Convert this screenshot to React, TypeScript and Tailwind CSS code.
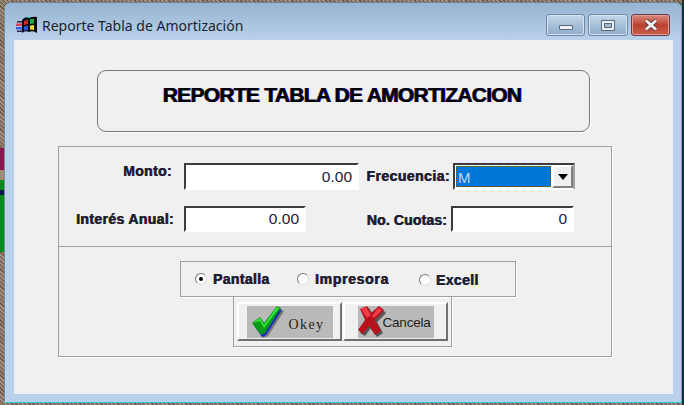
const sans = "font-['Liberation_Sans',Arial,sans-serif]";
const labelClass =
  "text-right text-[14px] leading-none font-bold tracking-[0.36px] text-[#1c1c2c] [text-shadow:0.4px_0_0_#2a3a90,-0.3px_0_0_#b07a30]";
const sunken =
  "border-2 border-t-[#3c3c3c] border-l-[#3c3c3c] border-r-white border-b-white bg-white";

function FlagIcon() {
  return (
    <svg width="22" height="18" viewBox="0 0 22 18" className="shrink-0">
      <path d="M6 4 Q9 0 13 2 Q17 0 21 1 L21 17 Q17 14 13 16 Q9 14 6 17 Z" fill="#0b0b12" />
      <path d="M8 5 L12 3.5 L12 8 L8 9 Z" fill="#d8202c" />
      <path d="M14 3 L18 3 L18 7.5 L14 8 Z" fill="#1fa845" />
      <path d="M8 10.5 L12 9.5 L12 14 L8 14.5 Z" fill="#2a55d8" />
      <path d="M14 9.5 L18 9 L18 14 L14 13.5 Z" fill="#e8d830" />
      <path d="M1 5h5v1.5H1z" fill="#26264a" />
      <path d="M0 7.5h6V10H0z" fill="#d8405a" />
      <path d="M0 11h6v2.5H0z" fill="#3a5ce0" />
      <path d="M1 14.5h5V16H1z" fill="#26264a" />
    </svg>
  );
}

function WindowButtons() {
  return (
    <div className="mt-[11px] mr-[11px] flex gap-[3px]">
      <div className="flex h-[22px] w-[39px] items-end justify-center rounded-[3px] border border-[#6f88a6] bg-gradient-to-b from-[#c5d7e9] via-[#a7c0d9] to-[#8fadcc] pb-[5px] shadow-[inset_0_0_0_1px_#d5e2ef]">
        <div className="h-[5px] w-[14px] rounded-[1px] border border-[#56697e] bg-[#eef2f6]" />
      </div>
      <div className="flex h-[22px] w-[40px] items-center justify-center rounded-[3px] border border-[#6f88a6] bg-gradient-to-b from-[#c5d7e9] via-[#a7c0d9] to-[#8fadcc] shadow-[inset_0_0_0_1px_#d5e2ef]">
        <div className="flex h-[11px] w-[14px] items-center justify-center border border-[#56697e] bg-[#eef2f6]">
          <div className="h-[5px] w-[8px] border border-[#56697e] bg-[#9fb6cd]" />
        </div>
      </div>
      <div className="flex h-[22px] w-[39px] items-center justify-center rounded-[3px] border border-[#6a3a48] bg-gradient-to-b from-[#d98c80] via-[#b9402e] to-[#c8604c] shadow-[inset_0_0_0_1px_#e2a094]">
        <svg width="16" height="12" viewBox="0 0 16 12">
          <path d="M3 1.5 L13 10.5 M13 1.5 L3 10.5" stroke="#5a3038" strokeWidth="4.6" />
          <path d="M3 1.5 L13 10.5 M13 1.5 L3 10.5" stroke="#eef0f2" strokeWidth="3" />
        </svg>
      </div>
    </div>
  );
}

function Field({ value, width, height }: { value: string; width: string; height: string }) {
  return (
    <div className={`${sunken} ${width} ${height} flex items-center justify-end pr-[5px] text-[15.5px] text-[#20203a]`}>
      {value}
    </div>
  );
}

function FrecuenciaSelect() {
  return (
    <div className="flex h-[27px] w-[122px] items-stretch border-2 border-t-[#3c3c3c] border-l-[#3c3c3c] border-r-[#a0a0a0] border-b-white bg-white">
      <div className="m-[1px] flex-1 border border-dotted border-[#7a4a10] bg-[#0078d7] pl-[1px] pt-[3px] text-[15px] leading-none text-[#b9dcfa]">
        M
      </div>
      <div className="flex w-[21px] items-center justify-center border-2 border-t-white border-l-white border-r-[#808080] border-b-[#808080] bg-[#f0f0f0]">
        <svg width="10" height="6" viewBox="0 0 10 6">
          <path d="M0 0h10L5 6z" fill="#000" />
        </svg>
      </div>
    </div>
  );
}

function Radio({ checked }: { checked?: boolean }) {
  return (
    <div className="flex h-[12px] w-[12px] shrink-0 items-center justify-center rounded-full border border-t-[#777] border-l-[#777] border-r-[#ddd] border-b-[#ddd] bg-white">
      {checked && <div className="h-[4px] w-[4px] rounded-full bg-black" />}
    </div>
  );
}

function RadioItem({ label, checked, className }: { label: string; checked?: boolean; className: string }) {
  return (
    <div className={`flex items-center ${className}`}>
      <Radio checked={checked} />
      <span className={labelClass}>{label}</span>
    </div>
  );
}

function CheckIcon() {
  return (
    <svg width="32" height="32" viewBox="0 0 32 32" className="shrink-0">
      <path d="M2 19 L10 14 L14 20 L27 3 L32 5 L16 30 L11 32 Z" fill="#777" />
      <path d="M1 18 L9 13 L13 19 L26 2 L30 4 L14 29 L10 31 Z" fill="#1a2ac0" />
      <path d="M0 17 L8 11 L12 17 L25 0 L29 2 L13 27 L9 29 Z" fill="#0a9a1a" />
      <path d="M1 17 L8 12 L12 19 L25 1 L27 2 L12 22 L8 15 Z" fill="#35e83c" />
    </svg>
  );
}

function CrossIcon() {
  return (
    <svg width="28" height="31" viewBox="0 0 28 31" className="shrink-0">
      <path d="M5 4 L11 2 L15 9 L23 2 L28 7 L19 16 L25 27 L19 31 L13 22 L7 30 L2 27 L9 16 Z" fill="#555" />
      <path d="M2 3 L9 0 L13 7 L21 0 L26 4 L17 14 L23 25 L17 29 L11 20 L5 28 L0 24 L7 14 Z" fill="#b8121c" />
      <path d="M3 3 L8 1 L13 9 L9 12 Z M20 2 L24 4 L16 12 L14 10 Z" fill="#f03c46" />
    </svg>
  );
}

function ImageButton({ panel, children }: { panel: string; children: React.ReactNode }) {
  return (
    <div className="flex h-[39px] w-[105px] items-center justify-center border-2 border-t-white border-l-white border-r-[#707070] border-b-[#707070] bg-[#f0f0f0]">
      <div className={`flex h-[32px] items-center bg-[#b9b9b9] ${panel}`}>{children}</div>
    </div>
  );
}

export default function App() {
  return (
    <div
      className={`${sans} flex h-[405px] w-[684px] overflow-hidden bg-[repeating-linear-gradient(45deg,#6b5a4a_0_1px,#a8957f_1px_2px,#8a7868_2px_3px)]`}
    >
      <div className="flex w-[4px] shrink-0 flex-col pt-[148px]">
        <div className="h-[22px] bg-[#8a1650]" />
        <div className="h-[10px] bg-[#a08c78]" />
        <div className="h-[10px] bg-[#058a1c]" />
        <div className="h-[5px] bg-[#0a1a50]" />
        <div className="h-[57px] bg-[#058a1c]" />
      </div>

      <div className="mt-[2px] flex h-[401px] w-[678px] shrink-0 flex-col rounded-t-[7px] border border-b-[#38c0d8] border-l-[#7d8a96] border-r-[#38c0d8] border-t-[#6f8296] bg-[#b9d1ea]">
        <div className="flex h-[37px] shrink-0 justify-between rounded-t-[6px] bg-gradient-to-b from-[#97b4d1] to-[#b9d1ea]">
          <div className="mt-[13px] ml-[11px] flex items-start gap-[4px]">
            <FlagIcon />
            <span className="font-['Noto_Sans',sans-serif] text-[14px] leading-[20px] text-[#1a2430]">
              Reporte Tabla de Amortización
            </span>
          </div>
          <WindowButtons />
        </div>

        <div className="mr-[8px] mb-[8px] ml-[9px] flex flex-1 flex-col bg-[#f0f0f0]">
          <div className="mt-[30px] ml-[83px] flex h-[62px] w-[493px] items-center justify-center rounded-[9px] border border-[#777] shadow-[1px_1px_0_#fff]">
            <h1 className="mr-[3px] mb-[12px] text-[21px] font-bold tracking-[-0.72px] text-black [text-shadow:0.6px_0_0_#0a1ad0,-0.5px_0_0_#8a5a10]">
              REPORTE TABLA DE AMORTIZACION
            </h1>
          </div>

          <div className="mt-[14px] ml-[44px] flex h-[211px] w-[554px] flex-col border border-[#a0a0a0] shadow-[1px_1px_0_#fff]">
            <div className="flex h-[100px] shrink-0 flex-col border-b border-[#a0a0a0] pt-[16px]">
              <div className="flex items-start">
                <div className={`mt-[1px] w-[113px] ${labelClass}`}>Monto:</div>
                <div className="ml-[12px]">
                  <Field value="0.00" width="w-[175px]" height="h-[27px]" />
                </div>
                <div className={`mt-[6px] ml-[4px] w-[87px] tracking-[0.45px] ${labelClass}`}>Frecuencia:</div>
                <div className="ml-[3px]">
                  <FrecuenciaSelect />
                </div>
              </div>
              <div className="mt-[16px] flex items-start">
                <div className={`mt-[6px] w-[115px] ${labelClass}`}>Interés Anual:</div>
                <div className="ml-[10px]">
                  <Field value="0.00" width="w-[122px]" height="h-[26px]" />
                </div>
                <div className={`mt-[7px] ml-[58px] w-[83px] ${labelClass}`}>
                  <span className="tracking-[0.15px]">No. Cuotas:</span>
                </div>
                <div className="ml-[4px]">
                  <Field value="0" width="w-[123px]" height="h-[26px]" />
                </div>
              </div>
            </div>

            <div className="mt-[14px] ml-[121px] flex h-[36px] w-[336px] shrink-0 items-center border border-[#a0a0a0] pl-[14px] shadow-[1px_1px_0_#fff]">
              <RadioItem label="Pantalla" checked className="w-[102px] gap-[6px]" />
              <RadioItem label="Impresora" className="w-[122px] gap-[6px] [&>span]:tracking-[0.7px]" />
              <RadioItem label="Excell" className="mt-[2px] gap-[5px]" />
            </div>

            <div className="ml-[174px] flex h-[50px] w-[219px] items-center justify-center gap-[1px] border border-t-0 border-[#a0a0a0] shadow-[1px_1px_0_#fff]">
              <ImageButton panel="w-[86px] pl-[5px]">
                <CheckIcon />
                <span className="mt-[6px] ml-[5px] font-['Liberation_Serif',serif] text-[14px] tracking-[1.4px] text-[#222]">
                  Okey
                </span>
              </ImageButton>
              <ImageButton panel="w-[76px]">
                <CrossIcon />
                <span className="mt-[3px] -ml-[3px] text-[13.5px] tracking-[-0.2px] text-[#222]">Cancela</span>
              </ImageButton>
            </div>
          </div>
        </div>
      </div>

      <div className="w-[2px] shrink-0 bg-[#14302e]" />
    </div>
  );
}
